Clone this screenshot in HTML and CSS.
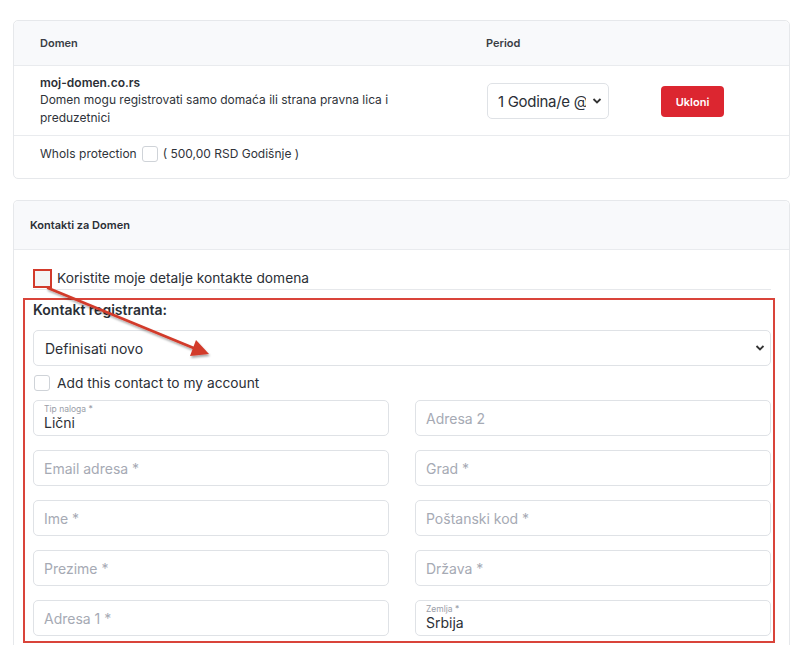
FILE: index.html
```html
<!DOCTYPE html>
<html>
<head>
<meta charset="utf-8">
<link rel="stylesheet" href="styles.css">
</head>
<body>
<div class="page">
  <div class="card">
    <div class="row head">
      <div>Domen</div>
      <div>Period</div>
      <div></div>
    </div>
    <div class="row item">
      <div class="dom">
        <div class="dom-name">moj-domen.co.rs</div>
        <div class="dom-desc">Domen mogu registrovati samo domaća ili strana pravna lica i preduzetnici</div>
      </div>
      <div>
        <div class="period-select">
          <span class="sel-text">1 Godina/e @ 500,00 RSD</span>
          <svg class="chev" width="10" height="8" viewBox="0 0 10 8"><path d="M1.5 2 L5 5.5 L8.5 2" fill="none" stroke="#333" stroke-width="1.8"/></svg>
        </div>
      </div>
      <div><button class="btn-red">Ukloni</button></div>
    </div>
    <div class="whois">
      <span>WhoIs protection</span>
      <span class="cb"></span>
      <span>( 500,00 RSD Godišnje )</span>
    </div>
  </div>

  <div class="card card2">
    <div class="card-head">Kontakti za Domen</div>
    <div class="card-body">
      <div class="use-row">
        <span class="cb-red"></span>
        <span>Koristite moje detalje kontakte domena</span>
      </div>
      <div class="redbox">
        <div class="reg-title">Kontakt registranta:</div>
        <div class="select-full">
          <span>Definisati novo</span>
          <svg class="chev" width="10" height="8" viewBox="0 0 10 8"><path d="M1.5 2 L5 5.5 L8.5 2" fill="none" stroke="#333" stroke-width="1.8"/></svg>
        </div>
        <div class="add-row">
          <span class="cb"></span>
          <span>Add this contact to my account</span>
        </div>
        <div class="fields">
          <div class="field filled"><span class="flabel">Tip naloga *</span><span class="fval">Lični</span></div>
          <div class="field"><span class="ph">Adresa 2</span></div>
          <div class="field"><span class="ph">Email adresa *</span></div>
          <div class="field"><span class="ph">Grad *</span></div>
          <div class="field"><span class="ph">Ime *</span></div>
          <div class="field"><span class="ph">Poštanski kod *</span></div>
          <div class="field"><span class="ph">Prezime *</span></div>
          <div class="field"><span class="ph">Država *</span></div>
          <div class="field"><span class="ph">Adresa 1 *</span></div>
          <div class="field filled"><span class="flabel">Zemlja *</span><span class="fval">Srbija</span></div>
        </div>
      </div>
    </div>
  </div>
</div>
<svg class="arrow" width="800" height="645" viewBox="0 0 800 645">
  <defs>
    <filter id="sh" x="-20%" y="-20%" width="140%" height="140%">
      <feDropShadow dx="1" dy="2" stdDeviation="1.2" flood-color="#000" flood-opacity="0.35"/>
    </filter>
  </defs>
  <g filter="url(#sh)">
    <line x1="48" y1="288" x2="196" y2="349" stroke="#d23a2b" stroke-width="2.6" stroke-linecap="round"/>
    <polygon points="209,354 190,356 196,340" fill="#d23a2b"/>
  </g>
</svg>
</body>
</html>
```

FILE: styles.css
```css
* { box-sizing: border-box; }
html, body { margin: 0; padding: 0; background: #fff; }
body {
  font-family: Inter, "Noto Sans", "Liberation Sans", sans-serif;
  color: #2b2f36;
  position: relative;
  width: 800px;
  height: 645px;
  overflow: hidden;
}
.page {
  padding: 20px 10px 0 13px;
}
.card {
  border: 1px solid #e6e8eb;
  border-radius: 5px;
  background: #fff;
}
.row {
  display: grid;
  grid-template-columns: 446px 174px 1fr;
  padding-left: 26px;
  align-items: center;
}
.head {
  height: 45px;
  background: #f8f9fb;
  border-bottom: 1px solid #e9ebee;
  border-radius: 5px 5px 0 0;
  font-size: 11px;
  font-weight: 600;
  color: #3a3e45;
}
.item {
  height: 70px;
  border-bottom: 1px solid #e9ebee;
}
.dom-name {
  font-size: 12px;
  font-weight: 600;
  color: #2b2f36;
  line-height: 17px;
}
.dom-desc {
  font-size: 12px;
  line-height: 18px;
  color: #2f333a;
  width: 350px;
}
.period-select {
  width: 122px;
  height: 36px;
  border: 1px solid #dfe2e6;
  border-radius: 5px;
  display: flex;
  align-items: center;
  padding: 0 6px 0 10px;
  gap: 4px;
  margin-top: 1px;
  margin-left: 1px;
}
.sel-text {
  font-size: 15px;
  letter-spacing: -0.3px;
  color: #2b2f36;
  white-space: nowrap;
  overflow: hidden;
  width: 88px;
  flex: none;
}
.chev { flex: none; margin-left: auto; }
.btn-red {
  width: 63px;
  height: 31px;
  border: none;
  border-radius: 4px;
  background: #dc2630;
  color: #fff;
  font-family: inherit;
  font-size: 11px;
  font-weight: 600;
  margin-left: 1px;
  margin-top: 2px;
  padding: 0;
}
.whois {
  height: 42px;
  display: flex;
  align-items: center;
  padding-left: 26px;
  padding-bottom: 7px;
  font-size: 12px;
  color: #2f333a;
  gap: 5px;
}
.cb {
  width: 16px;
  height: 16px;
  border: 1px solid #cfd3d8;
  border-radius: 3px;
  background: #fff;
  display: inline-block;
  flex: none;
}
.card2 {
  margin-top: 21px;
  height: 460px;
  border-bottom: none;
}
.card-head {
  height: 49px;
  background: #f8f9fb;
  border-bottom: 1px solid #e9ebee;
  border-radius: 5px 5px 0 0;
  display: flex;
  align-items: center;
  padding-left: 16px;
  font-size: 11px;
  font-weight: 600;
  color: #2b2f36;
}
.card-body {
  padding: 19px 18px 0 19px;
}
.use-row {
  display: flex;
  align-items: center;
  height: 21px;
  border-bottom: 1px solid #e6e8eb;
  font-size: 13.75px;
  color: #2b2f36;
  gap: 5px;
  padding-bottom: 2px;
}
.cb-red {
  width: 19px;
  height: 19px;
  border: 2.5px solid #d23a2b;
  background: #f4f4f5;
  flex: none;
  margin-top: 1px;
}
.redbox {
  margin: 8px -4px 0 -10px;
  border: 2px solid #d9443a;
  padding: 0 2px 5px 8px;
}
.reg-title {
  font-size: 14px;
  font-weight: 600;
  line-height: 20px;
  color: #2b2f36;
}
.select-full {
  margin-top: 10px;
  height: 36px;
  border: 1px solid #dfe2e6;
  border-radius: 5px;
  display: flex;
  align-items: center;
  padding: 0 5px 0 11px;
  font-size: 14px;
  color: #2b2f36;
}
.add-row {
  display: flex;
  align-items: center;
  gap: 7px;
  margin-top: 9px;
  height: 16px;
  font-size: 13.75px;
  color: #2b2f36;
  padding-left: 1px;
}
.fields {
  margin-top: 9px;
  display: grid;
  grid-template-columns: 356px 356px;
  column-gap: 26px;
  row-gap: 14px;
}
.field {
  height: 36px;
  border: 1px solid #dfe2e6;
  border-radius: 5px;
  display: flex;
  flex-direction: column;
  justify-content: center;
  padding-left: 10px;
}
.ph {
  font-size: 14px;
  color: #a6aab4;
}
.field.filled { justify-content: flex-start; padding-top: 3px; }
.flabel {
  font-size: 8.5px;
  line-height: 10px;
  color: #9a9ea8;
}
.fval {
  font-size: 14px;
  line-height: 17px;
  color: #2b2f36;
}
.arrow {
  position: absolute;
  left: 0;
  top: 0;
  pointer-events: none;
}
```
